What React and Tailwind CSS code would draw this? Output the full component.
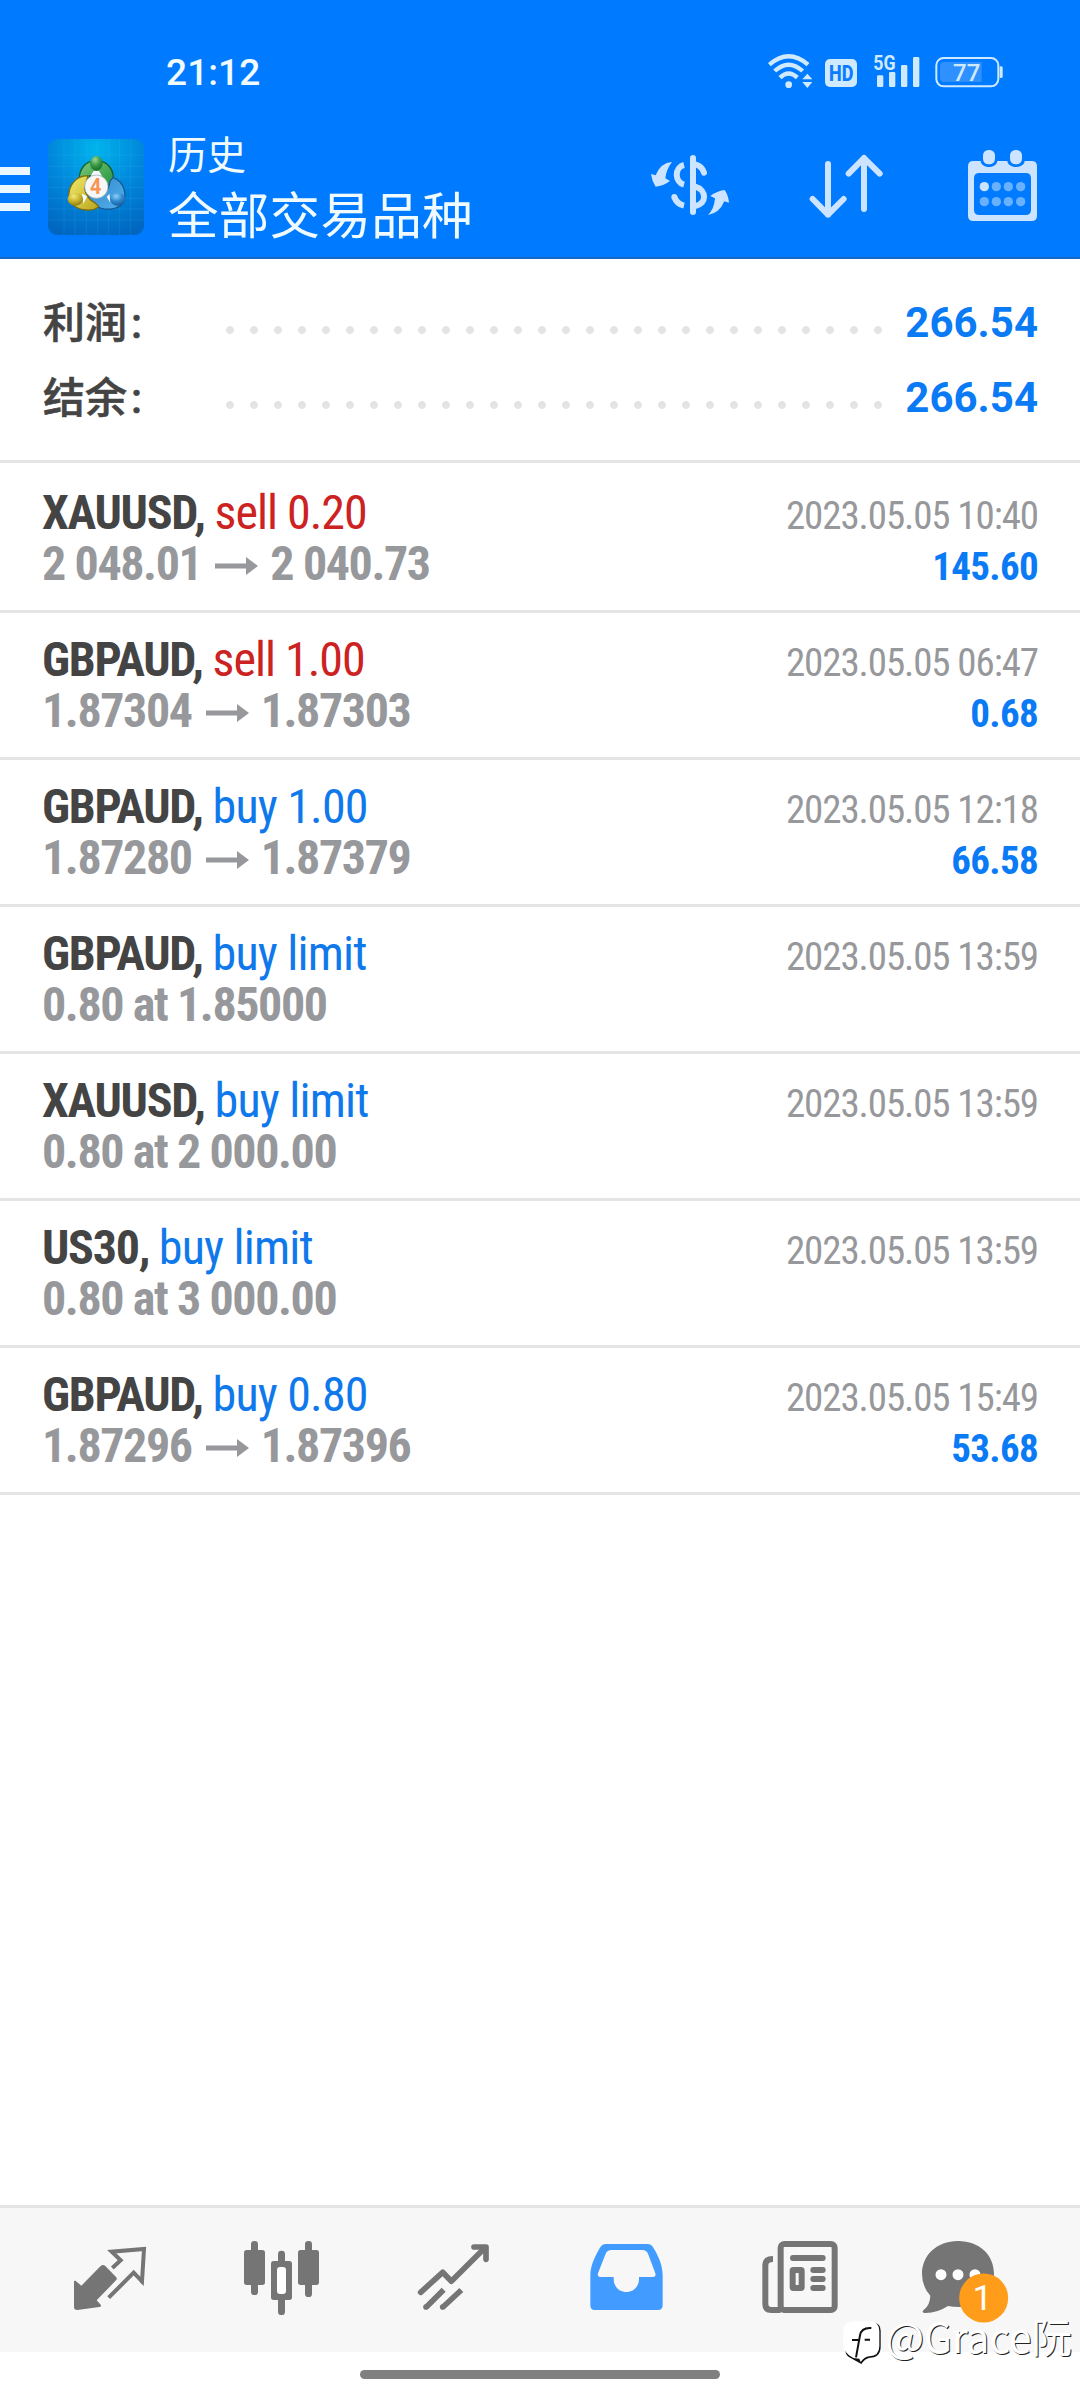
import React from 'react';

const deals = [
    { symbol: 'XAUUSD', type: 'sell 0.20', from: '2 048.01', to: '2 040.73', time: '2023.05.05 10:40', profit: '145.60', sell: true },
    { symbol: 'GBPAUD', type: 'sell 1.00', from: '1.87304', to: '1.87303', time: '2023.05.05 06:47', profit: '0.68', sell: true },
    { symbol: 'GBPAUD', type: 'buy 1.00', from: '1.87280', to: '1.87379', time: '2023.05.05 12:18', profit: '66.58' },
    { symbol: 'GBPAUD', type: 'buy limit', order: '0.80 at 1.85000', time: '2023.05.05 13:59' },
    { symbol: 'XAUUSD', type: 'buy limit', order: '0.80 at 2 000.00', time: '2023.05.05 13:59' },
    { symbol: 'US30', type: 'buy limit', order: '0.80 at 3 000.00', time: '2023.05.05 13:59' },
    { symbol: 'GBPAUD', type: 'buy 0.80', from: '1.87296', to: '1.87396', time: '2023.05.05 15:49', profit: '53.68' },
];

// Wifi, HD, signal and battery
function StatusIcons() {
    return (
        <div className="flex h-[34px] items-end text-[#cfeaff]">
            <svg className="h-[34px] w-[45px]" viewBox="80 42 135 102" fill="none" stroke="currentColor">
                <path d="M84 74 Q142 24 200 74" strokeWidth="13" />
                <path d="M100 93 Q142 55 184 93" strokeWidth="13" />
                <path d="M116 113 Q142 88 168 113" strokeWidth="13" />
                <circle cx="142" cy="134" r="10" fill="currentColor" stroke="none" />
                <path d="M183 118 L198 101 L213 118 Z M183 126 L198 144 L213 126 Z" fill="currentColor" stroke="none" />
            </svg>
            <svg className="ml-[11px] h-[34px] w-[34px]" viewBox="249 42 102 102">
                <rect x="252" y="57" width="96" height="84" rx="15" fill="currentColor" />
                <text x="264" y="123" fontSize="65" fontWeight="800" fill="#0a7cff" textLength="73" lengthAdjust="spacingAndGlyphs">HD</text>
            </svg>
            <svg className="ml-[15px] h-[34px] w-[48px] overflow-visible" viewBox="397 42 144 102" fill="currentColor">
                <text x="398" y="89" fontSize="58" fontWeight="700" textLength="67" lengthAdjust="spacingAndGlyphs">5G</text>
                <rect x="409" y="106" width="19" height="35" rx="4" />
                <rect x="445" y="96" width="19" height="45" rx="4" />
                <rect x="481" y="75" width="19" height="66" rx="4" />
                <rect x="517" y="51" width="19" height="90" rx="4" />
            </svg>
            <svg className="ml-[14px] h-[34px] w-[68px]" viewBox="583 42 204 102">
                <rect x="587" y="54" width="186" height="85" rx="22" fill="none" stroke="currentColor" strokeWidth="6" />
                <path d="M723 66 H610 Q598 66 598 78 V114 Q598 126 610 126 H723 Z" fill="#2f90ff" />
                <rect x="777" y="79" width="9" height="35" rx="4" fill="currentColor" />
                <text x="637" y="124" fontSize="74" fill="currentColor" textLength="82" lengthAdjust="spacingAndGlyphs" fontWeight="500">77</text>
            </svg>
        </div>
    );
}

function AppLogo() {
    return (
        <svg className="h-[96px] w-[96px] rounded-[9px]" viewBox="54 42 288 288">
            <defs>
                <radialGradient id="bg" cx="0.5" cy="0.1" r="0.95">
                    <stop offset="0" stopColor="#00b4ec" />
                    <stop offset="0.5" stopColor="#0088dc" />
                    <stop offset="1" stopColor="#0066c0" />
                </radialGradient>
                <linearGradient id="green" x1="0" y1="0" x2="1" y2="1">
                    <stop offset="0" stopColor="#7cc97a" />
                    <stop offset="1" stopColor="#1f8f3a" />
                </linearGradient>
                <linearGradient id="yellow" x1="0" y1="0" x2="1" y2="1">
                    <stop offset="0" stopColor="#f4ec6a" />
                    <stop offset="1" stopColor="#b9a51e" />
                </linearGradient>
                <linearGradient id="blue" x1="0" y1="0" x2="1" y2="1">
                    <stop offset="0" stopColor="#2f86cc" />
                    <stop offset="1" stopColor="#55b2ec" />
                </linearGradient>
                <radialGradient id="greenHead" cx="0.4" cy="0.25" r="0.8">
                    <stop offset="0" stopColor="#9cd79a" />
                    <stop offset="0.5" stopColor="#3b9a45" />
                    <stop offset="1" stopColor="#17692a" />
                </radialGradient>
                <radialGradient id="yellowHead" cx="0.4" cy="0.25" r="0.8">
                    <stop offset="0" stopColor="#f2ea80" />
                    <stop offset="0.5" stopColor="#c9b52c" />
                    <stop offset="1" stopColor="#8a7a10" />
                </radialGradient>
                <radialGradient id="blueHead" cx="0.4" cy="0.25" r="0.8">
                    <stop offset="0" stopColor="#8fd0f8" />
                    <stop offset="0.5" stopColor="#2f8bd0" />
                    <stop offset="1" stopColor="#12589c" />
                </radialGradient>
            </defs>
            <rect x="54" y="42" width="288" height="288" fill="url(#bg)" />
            <path
                d="M102 42 V330 M135 42 V330 M169 42 V330 M203 42 V330 M236 42 V330 M269 42 V330 M302 42 V330 M54 90 H342 M54 124 H342 M54 156 H342 M54 188 H342 M54 220 H342 M54 252 H342 M54 285 H342"
                stroke="#7fd4ff"
                strokeOpacity="0.16"
                strokeWidth="2"
            />
            {/* three figures around the middle */}
            <path d="M150 172 C142 138 164 107 199 107 C236 107 256 140 248 172 Q244 190 232 196 L222 168 L180 152 L168 176 Z" fill="url(#green)" stroke="#14602a" strokeWidth="4" />
            <path d="M249 158 C276 166 288 194 284 222 C276 248 246 258 214 250 C190 244 174 226 174 208 L214 212 Q238 196 240 168 Z" fill="url(#blue)" stroke="#165a98" strokeWidth="4" />
            <path d="M117 222 C112 184 136 152 174 152 L164 190 Q168 220 198 236 L206 244 C190 262 150 256 132 242 Z" fill="url(#yellow)" stroke="#7b6c0c" strokeWidth="4" />
            <path d="M182 152 L191 138 H207 L216 152 Z" fill="#f4f8ff" />
            <path d="M156 206 L172 214 L160 236 Z M238 206 L230 216 L242 234 Z" fill="#f4f8ff" />
            <ellipse cx="199" cy="115" rx="19" ry="22" fill="url(#greenHead)" />
            <ellipse cx="136" cy="223" rx="23" ry="19" fill="url(#yellowHead)" />
            <ellipse cx="263" cy="223" rx="23" ry="19" fill="url(#blueHead)" />
            <circle cx="199" cy="185" r="35" fill="#f6f7f8" stroke="#99aaaa" strokeWidth="2" />
            <text x="197" y="208" textAnchor="middle" fontSize="64" fontWeight="700" fill="#f79552" textLength="34" lengthAdjust="spacingAndGlyphs">4</text>
        </svg>
    );
}

function Header() {
    return (
        <header className="h-[259px] border-b-2 border-[#1769c4] bg-[#007aff] text-white">
            <div className="flex h-[118px] items-start justify-between pt-[54px] pr-[77px] pl-[166px]">
                <span className="mt-[-3px] text-[37px] leading-[44px] font-medium tracking-[0.1px] text-[#f0fbff]">21:12</span>
                <StatusIcons />
            </div>
            <div className="flex h-[139px] items-start">
                <div className="mt-[49px] flex w-[30px] flex-col gap-[10px]">
                    <span className="h-[8px] bg-[#ecf8ff]" />
                    <span className="h-[8px] bg-[#ecf8ff]" />
                    <span className="h-[8px] bg-[#ecf8ff]" />
                </div>
                <div className="mt-[21px] ml-[18px]">
                    <AppLogo />
                </div>
                <div className="mt-[11px] ml-[24px] flex flex-col whitespace-nowrap text-[#f0fbff]">
                    <span className="text-[39px] leading-[54px]">历史</span>
                    <span className="text-[50.5px] leading-[68px] tracking-[0.3px]">全部交易品种</span>
                </div>
                <div className="mt-[32px] mr-[43px] ml-auto flex text-[#cce4ff]">
                    {/* deposit / withdrawal filter */}
                    <svg className="h-[71px] w-[80px]" viewBox="90 60 240 213" fill="none" stroke="currentColor">
                        <path d="M219 84 V246" strokeWidth="18" strokeLinecap="round" />
                        <path d="M192 105 C163 112 163 156 192 164" strokeWidth="18" />
                        <path d="M226 103 Q246 108 252 128" strokeWidth="18" strokeLinecap="round" />
                        <path d="M163 201 Q170 222 192 227" strokeWidth="18" />
                        <circle cx="163" cy="201" r="9" fill="currentColor" stroke="none" />
                        <path d="M226 170 C261 180 261 222 226 228" strokeWidth="18" />
                        <path d="M156 96 Q122 98 107 136 L93 132 Q96 154 107 170 Q130 168 150 153 L136 145 Q139 118 156 96 Z" fill="currentColor" stroke="none" />
                        <path d="M264 255 Q283 236 285 205 L271 198 Q288 184 314 180 Q325 196 327 218 L313 214 Q298 250 264 255 Z" fill="currentColor" stroke="none" />
                    </svg>
                    <svg className="ml-[79px] h-[71px] w-[74px]" viewBox="567 60 222 213" fill="none" stroke="currentColor" strokeWidth="18" strokeLinecap="round" strokeLinejoin="round">
                        <path d="M624 102 V254 M578 207 L624 254 L671 207" />
                        <path d="M732 237 V84 M686 131 L732 84 L779 131" />
                    </svg>
                    <svg className="ml-[85px] h-[71px] w-[69px]" viewBox="1044 60 207 213" fill="currentColor">
                        <path
                            fillRule="evenodd"
                            d="M1060 93 H1082 C1083 104 1093 111 1107 111 C1121 111 1131 104 1132 93 H1162 C1163 104 1174 111 1188 111 C1202 111 1213 104 1214 93 H1235 Q1251 93 1251 109 V257 Q1251 273 1235 273 H1060 Q1044 273 1044 257 V109 Q1044 93 1060 93 Z M1078 129 Q1062 129 1062 145 V239 Q1062 255 1078 255 H1217 Q1233 255 1233 239 V145 Q1233 129 1217 129 Z"
                        />
                        <rect x="1089" y="60" width="36" height="43" rx="16" />
                        <rect x="1170" y="60" width="36" height="43" rx="16" />
                        <circle cx="1093" cy="170" r="14" />
                        <g fill="#68b1ff">
                            <circle cx="1129" cy="170" r="14" />
                            <circle cx="1165" cy="170" r="14" />
                            <circle cx="1202" cy="170" r="14" />
                            <circle cx="1093" cy="215" r="14" />
                            <circle cx="1129" cy="215" r="14" />
                            <circle cx="1165" cy="215" r="14" />
                            <circle cx="1202" cy="215" r="14" />
                        </g>
                    </svg>
                </div>
            </div>
        </header>
    );
}

function SummaryLine({ label, value }) {
    return (
        <div className="flex h-[75px] items-center">
            <span className="mt-[3px] w-[175px] text-[42px] leading-none font-medium text-[#444444] [-webkit-text-stroke:0.6px_#444444]">
                {label}
                <span className="ml-[4px]">:</span>
            </span>
            <span className="mt-[15px] h-[8px] w-[672px] bg-[radial-gradient(circle,#e4e4e4_3.6px,transparent_4.2px)] bg-[length:24px_8px]" />
            <span className="ml-auto text-[42px] leading-none font-bold text-[#0a7af5]">{value}</span>
        </div>
    );
}

function DealRow({ deal }) {
    return (
        <div className="flex h-[147px] justify-between border-b-3 border-[#e4e4e4] pt-[21px] pr-[42px] pl-[42px] font-['Roboto_Condensed',Roboto,sans-serif] whitespace-nowrap font-stretch-condensed">
            <div className="text-[48px] leading-[51px]">
                <div>
                    <span className="font-bold tracking-[-1.3px] text-[#444444]">{deal.symbol}, </span>
                    <span className={deal.sell ? 'tracking-[-1px] text-[#cc2222]' : 'tracking-[-0.8px] text-[#0f79ec]'}>{deal.type}</span>
                </div>
                <div className="flex items-center font-bold tracking-[-1.4px] text-[#97989b]">
                    {deal.order || (
                        <>
                            {deal.from}
                            <svg className="mt-[4px] mr-[12px] ml-[14px] h-[18px] w-[43px]" viewBox="0 0 43 18" fill="currentColor">
                                <path d="M0 6.5 H31 V0 L43 9 L31 18 V11.5 H0 Z" />
                            </svg>
                            {deal.to}
                        </>
                    )}
                </div>
            </div>
            <div className="pt-[4px] text-right text-[39px] leading-[51px]">
                <div className="tracking-[-1.1px] text-[#97989b]">{deal.time}</div>
                <div className="font-bold tracking-[-0.7px] text-[#0a7af5]">{deal.profit}</div>
            </div>
        </div>
    );
}

function BottomNav() {
    return (
        <nav className="flex h-[147px] gap-[63px] border-t-3 border-[#e4e4e4] bg-[#f7f7f7] pt-[32px] pl-[55px] text-[#757575]">
            {/* quotes */}
            <svg className="h-[76px] w-[110px] shrink-0" viewBox="-15 30 330 228" fill="none" stroke="currentColor">
                <path d="M42 153 Q46 151 50 155 L64 167 L122 108 Q129 102 136 108 L168 141 Q173 146 168 151 L110 211 L122 224 Q126 230 118 231 L52 240 Q42 240 42 231 Z" fill="currentColor" stroke="none" />
                <path d="M157 114 L182 91 L155 65 L252 57 L246 154 L221 128 L146 203" strokeWidth="12" />
                <circle cx="155" cy="65" r="5" fill="currentColor" stroke="none" />
                <circle cx="246" cy="156" r="5" fill="currentColor" stroke="none" />
            </svg>
            {/* charts */}
            <svg className="h-[76px] w-[110px] shrink-0" viewBox="504 30 330 228" fill="currentColor">
                <rect x="573" y="33" width="21" height="162" rx="10" />
                <rect x="552" y="60" width="63" height="105" rx="8" />
                <rect x="654" y="62" width="21" height="50" rx="10" />
                <rect x="654" y="190" width="21" height="65" rx="10" />
                <rect x="633" y="93" width="63" height="117" rx="8" />
                <rect x="651" y="111" width="27" height="81" rx="9" fill="#fff" />
                <rect x="735" y="33" width="21" height="168" rx="10" />
                <rect x="714" y="60" width="63" height="105" rx="8" />
            </svg>
            {/* trade */}
            <svg className="h-[76px] w-[110px] shrink-0" viewBox="1023 30 330 228" fill="none" stroke="currentColor" strokeWidth="17" strokeLinejoin="round">
                <path d="M1082 187 L1148 127 L1174 154 L1272 56" strokeLinecap="round" />
                <path d="M1242 51 H1278 V88" strokeLinecap="round" />
                <path d="M1099 231 L1151 179 M1149 231 L1204 180" />
                <circle cx="1098" cy="231" r="8.5" fill="currentColor" stroke="none" />
                <circle cx="1148" cy="231" r="8.5" fill="currentColor" stroke="none" />
            </svg>
            {/* history */}
            <svg className="h-[76px] w-[110px] shrink-0" viewBox="-18 30 330 228" fill="#429cff">
                <path
                    fillRule="evenodd"
                    d="M78 42 H202 Q213 42 219 52 C236 78 248 108 248 136 V226 Q248 240 234 240 H44 Q31 240 31 226 V136 C31 108 45 78 61 52 Q67 42 78 42 Z M94 60 Q82 60 77 71 L54 130 Q51 141 61 141 H101 V148 C101 170 118 186 139 186 C160 186 177 170 177 148 V141 H218 Q229 141 226 130 L204 71 Q199 60 187 60 Z"
                />
            </svg>
            {/* news */}
            <svg className="h-[76px] w-[110px] shrink-0" viewBox="501 30 330 228" fill="none" stroke="currentColor" strokeWidth="18">
                <rect x="602" y="42" width="162" height="198" rx="11" />
                <path d="M579 87 Q556 87 556 106 V222 Q556 240 574 240 H602" />
                <path d="M639 84 H728" strokeLinecap="round" />
                <path d="M700 120 H728 M700 147 H728 M700 174 H728" strokeLinecap="round" />
                <rect x="638" y="120" width="27" height="54" rx="2" />
            </svg>
            {/* messages */}
            <svg className="h-[80px] w-[110px] shrink-0 overflow-visible" viewBox="1020 30 330 240" fill="currentColor">
                <path d="M1134 33 C1200 33 1242 76 1242 132 C1242 188 1198 231 1138 231 Q1119 231 1104 228 Q1070 250 1034 249 Q1023 248 1031 240 Q1050 226 1051 197 Q1026 170 1026 132 C1026 76 1070 33 1134 33 Z" />
                <g fill="#fff">
                    <circle cx="1083" cy="134" r="16.5" />
                    <circle cx="1134" cy="134" r="16.5" />
                    <circle cx="1185" cy="134" r="16.5" />
                </g>
                <circle cx="1211" cy="204" r="73.5" fill="#ff9d1b" />
                <text x="1207" y="240" fontSize="106" textAnchor="middle" fill="#fff">1</text>
            </svg>
        </nav>
    );
}

// Author mark over the bottom right corner
function AuthorMark() {
    return (
        <div className="absolute right-[8px] bottom-[34px] flex h-[46px] items-start gap-[4px]">
            <svg className="h-[46px] w-[40px]" viewBox="796 272 120 138">
                <path d="M818 384 Q806 378 806 362 V304 Q806 280 830 280 H888 Q912 280 912 304 V352 Q912 384 880 385 Q864 388 854 404 Z" fill="#111" />
                <path d="M832 276 H878 Q908 276 908 306 V350 Q908 380 878 381 Q862 383 852 398 L848 388 L830 386 Q800 370 800 346 V308 Q800 276 832 276 Z" fill="#fff" />
                <path d="M884 296 Q854 294 850 318 L838 384 M826 332 H850 M864 331 H880" fill="none" stroke="#111" strokeWidth="6" />
            </svg>
            <span className="mt-[-5px] font-['Noto_Sans_CJK_SC',sans-serif] text-[40.5px] leading-[41px] whitespace-nowrap text-white [text-shadow:1px_1px_0_#222]">@Grace阮</span>
        </div>
    );
}

function App() {
    return (
        <div className="relative flex h-[2400px] w-[1080px] flex-col overflow-hidden bg-white font-[Roboto,'Noto_Sans_CJK_SC',sans-serif]">
            <Header />
            <section className="h-[204px] border-b-3 border-[#e4e4e4] pt-[26px] pr-[42px] pl-[43px]">
                <SummaryLine label="利润" value="266.54" />
                <SummaryLine label="结余" value="266.54" />
            </section>
            <main className="flex-1 pt-[3px]">
                {deals.map((deal, i) => (
                    <DealRow key={i} deal={deal} />
                ))}
            </main>
            <BottomNav />
            <div className="flex h-[48px] justify-center pt-[18px]">
                <div className="h-[9px] w-[360px] rounded-full bg-[#808080]" />
            </div>
            <AuthorMark />
        </div>
    );
}

export default App;
